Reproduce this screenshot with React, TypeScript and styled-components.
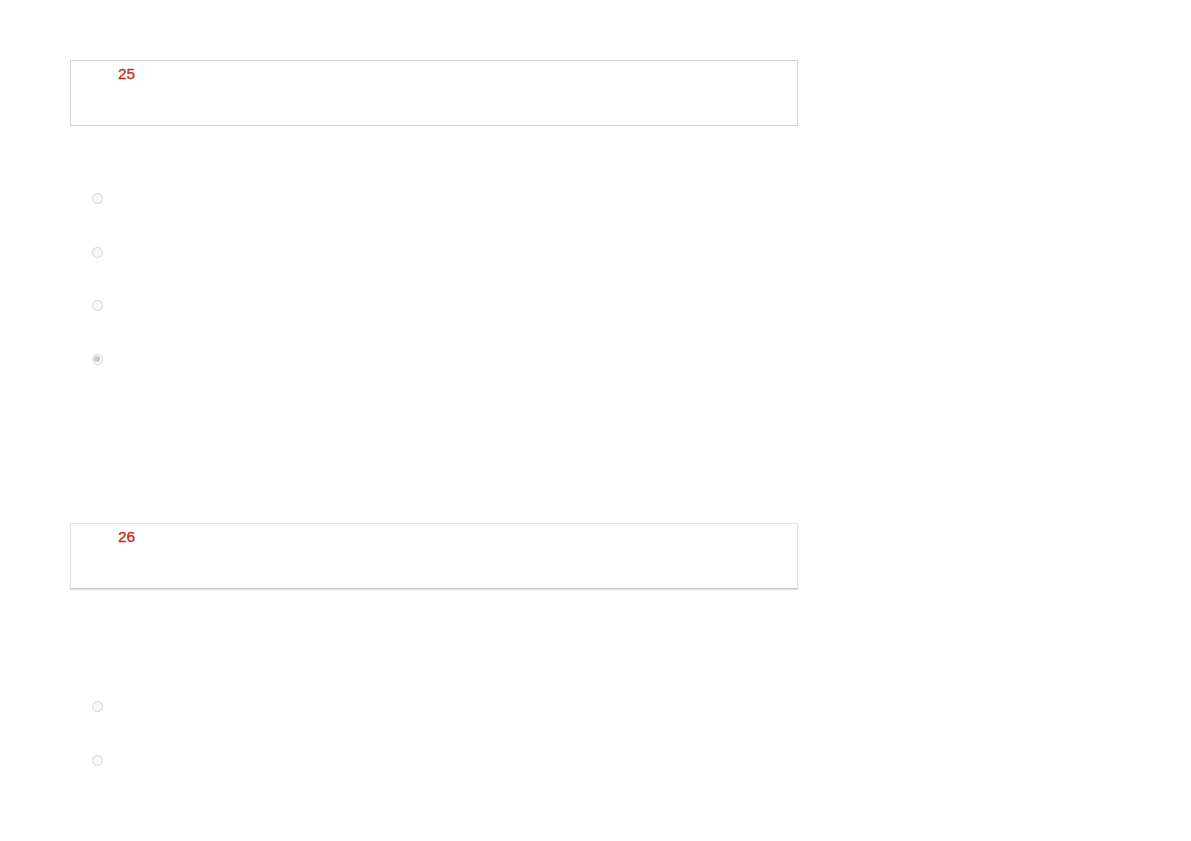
import React from 'react'
import styled, { createGlobalStyle } from 'styled-components'

const GlobalStyle = createGlobalStyle`
    html, body {
        margin: 0;
        padding: 0;
        background: #ffffff;
        font-family: "Liberation Sans", Arial, sans-serif;
    }
`

const Page = styled.div`
    width: 1191px;
    height: 841px;
    overflow: hidden;
    padding: 60px 0 0 70px;
    box-sizing: border-box;
`

const Question = styled.section<{ $gapAfter: number }>`
    width: 728px;
    margin-bottom: ${p => p.$gapAfter}px;
`

const QuestionHead = styled.div<{ $shadowed?: boolean }>`
    border: 1px solid ${p => (p.$shadowed ? '#e2e4e8' : '#cfd4dc')};
    border-bottom-color: ${p => (p.$shadowed ? '#c5cad3' : '#cfd4dc')};
    box-shadow: ${p => (p.$shadowed ? '0 1px 1px rgba(160, 168, 180, 0.35)' : 'none')};
    padding: 3px 0 0 47px;
    box-sizing: border-box;
    height: 66px;
`

const Number = styled.span`
    color: #c62828;
    font-family: "Liberation Sans", Arial, sans-serif;
    font-weight: 400;
    font-size: 15.5px;
    line-height: 20px;
    -webkit-text-stroke: 0.3px #c62828;
`

const Options = styled.ul<{ $top: number }>`
    list-style: none;
    margin: ${p => p.$top}px 0 0 0;
    padding: 0 0 0 21.5px;
`

const Option = styled.li`
    height: 53.5px;
    display: flex;
    align-items: center;
`

const Radio = styled.span<{ $checked?: boolean }>`
    width: 11px;
    height: 11px;
    box-sizing: border-box;
    border-radius: 50%;
    border: 1px solid #d4d4d4;
    background: #f8f8f8;
    display: flex;
    align-items: center;
    justify-content: center;
    &::after {
        content: '';
        display: ${p => (p.$checked ? 'block' : 'none')};
        width: 6px;
        height: 6px;
        border-radius: 50%;
        background: #c8c8c8;
    }
`

const questions = [
    { num: 25, options: [false, false, false, true], top: 46, gapAfter: 137, shadowed: false },
    { num: 26, options: [false, false], top: 91, gapAfter: 0, shadowed: true },
]

export default function App() {
    return (
        <>
            <GlobalStyle />
            <Page>
                {questions.map(q => (
                    <Question key={q.num} $gapAfter={q.gapAfter}>
                        <QuestionHead $shadowed={q.shadowed}>
                            <Number>{q.num}</Number>
                        </QuestionHead>
                        <Options $top={q.top}>
                            {q.options.map((checked, i) => (
                                <Option key={i}>
                                    <Radio $checked={checked} />
                                </Option>
                            ))}
                        </Options>
                    </Question>
                ))}
            </Page>
        </>
    )
}
